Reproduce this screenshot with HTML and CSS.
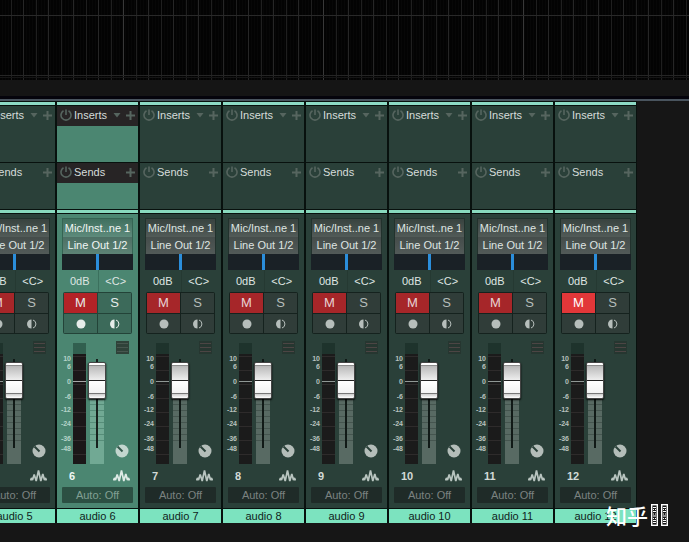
FILE: index.html
```
<!DOCTYPE html>
<html lang="en">
<head>
    <meta charset="UTF-8">
    <meta name="viewport" content="width=device-width, initial-scale=1.0">
    <title>Mixer</title>
    <link rel="stylesheet" href="styles.css">
</head>
<body>
    <div class="timeline"></div>
    <div class="divider"></div>

    <main class="mixer">
        <div class="strips" id="strips"></div>
    </main>

    <div class="watermark">
        <span>知乎</span>
        <svg width="17" height="22" viewBox="0 0 17 22" fill="none" stroke="#fff">
            <g id="box">
                <rect x="0.700" y="0.700" width="5.600" height="20.600" stroke-width="1.400"/>
                <path d="M2 3.500h3M2 5.500h1M4 5.500h1M2 7.500h3M2 10h1M4 10h1M2 12h3M2 14.500h1M4 14.500h1M2 16.500h3M2 18.500h3"/>
            </g>
            <use href="#box" x="10"/>
        </svg>
    </div>

    <script src="mixer.js"></script>
</body>
</html>
```

FILE: styles.css
```
:root {
    --mint: #7ce3bf;
    --strip-bg: #2a4039;
    --strip-line: #08110e;
    --panel-bg: #161616;
}

* {
    margin: 0;
    padding: 0;
    box-sizing: border-box;
}

body {
    background-color: var(--panel-bg);
    color: #dfe5e2;
    font-family: "Liberation Sans", Arial, sans-serif;
    font-size: 11px;
    line-height: 16px;
    overflow: hidden;
}

button {
    border: none;
    background: none;
    color: inherit;
    font: inherit;
    cursor: pointer;
}

svg {
    display: block;
}

/* arrange view */
.timeline {
    height: 80px;
    background-color: #030303;
    background-image:
        linear-gradient(transparent 15px, #292929 15px, #292929 16px, transparent 16px, transparent 75px, #252525 75px, #252525 76px, transparent 76px, transparent 77px, #151515 77px, #151515 78px, transparent 78px),
        repeating-linear-gradient(90deg, transparent 0, transparent 123px, #383838 123px, #383838 124px, transparent 124px, transparent 200px),
        repeating-linear-gradient(90deg, transparent 0, transparent 11px, #1f1f1f 11px, #1f1f1f 12px, transparent 12px, transparent 23px, #262626 23px, #262626 24px, transparent 24px, transparent 25px),
        repeating-linear-gradient(90deg, #030303 0, #030303 2px, #070707 2px, #070707 3px);
}

.divider {
    height: 19px;
    background-color: #151515;
    border-bottom: 3px solid #05040c;
}

/* mixer */
.mixer {
    border-top: 2px solid #49545e;
    overflow: hidden;
}

.strips {
    display: flex;
    gap: 2px;
    width: max-content;
    margin: -2px 0 0 -26px;
    padding-right: 1px;
    background-color: var(--strip-line);
}

.strip {
    width: 81px;
    border-top: 2px solid #3f716a;
    background-color: var(--strip-line);
}

.rack {
    height: 60px;
    margin-top: 1px;
    border-top: 3px solid #8ddac5;
    background-color: var(--strip-bg);
}

.rack.sends {
    height: 46px;
    border-top: none;
}

.rack-head {
    display: flex;
    align-items: center;
    height: 21px;
    padding: 0 3px 2px;
    border-top: 1px solid var(--strip-line);
    color: #d6dcda;
}

.sends .rack-head {
    height: 20px;
    border-top: none;
}

.rack-head button {
    color: #56655f;
}

.rack-head .label {
    flex: 1;
    margin-left: 2px;
}

.rack-head .arrow {
    margin-right: 5px;
}

.channel {
    height: 298px;
    margin-top: 1px;
    padding: 5px 5px 4px;
    border-top: 3px solid #87d9bd;
    background-color: var(--strip-bg);
    box-shadow: inset 0 1px 0 var(--strip-line);
}

.io {
    display: flex;
    flex-direction: column;
    height: 36px;
    padding-top: 1px;
    border: 1px solid #22322d;
    border-bottom: none;
    background: linear-gradient(#38433f, #515a57 50%, #444c4a 50%, #525a58);
    text-align: center;
    white-space: nowrap;
}

.io button {
    height: 17px;
    line-height: 17px;
}

.pan {
    display: block;
    width: 100%;
    height: 16px;
    appearance: none;
    background-color: #1a2126;
}

.pan::-webkit-slider-thumb {
    appearance: none;
    width: 3px;
    height: 16px;
    background-color: #2b8edb;
}

.values {
    display: grid;
    grid-template-columns: 1fr 1fr;
    height: 22px;
    line-height: 22px;
    text-align: center;
}

.values span + span {
    border-left: 1px solid #253932;
}

.buttons {
    display: grid;
    grid-template-columns: 1fr 1fr;
    grid-template-rows: 20px 19px;
    gap: 1px;
    margin: 0 1px;
    padding: 1px;
    border-radius: 2px;
    background-color: #15221e;
}

.buttons button {
    display: flex;
    align-items: center;
    justify-content: center;
    background-color: #303d39;
    color: #b6bebb;
    font-size: 13px;
}

.buttons .mute {
    background-color: #a62629;
    color: #e8d4d4;
}

.buttons .mute.bright {
    background-color: #e23739;
    color: #fff;
}

.level {
    display: flex;
    height: 130px;
    margin-left: -4px;
    padding-top: 9px;
}

.scale {
    display: grid;
    grid-template-rows: 8px 15px 15px 13px 14px 15px 10px 8px;
    justify-items: end;
    width: 13px;
    margin: 12px 2px 0 0;
    color: #b8c1be;
    font-size: 7px;
    font-weight: bold;
    line-height: 8px;
    white-space: nowrap;
}

.meter {
    width: 13px;
    height: 121px;
    background:
        linear-gradient(#909895, #909895) 0 38px / 13px 1px no-repeat,
        linear-gradient(#1e332c 11px, transparent 11px),
        repeating-linear-gradient(#1b1b1b 0, #1b1b1b 13px, #2e2b2b 13px, #2e2b2b 14px);
}

.fader {
    width: 18px;
    height: 121px;
    margin-left: 2px;
    appearance: none;
    writing-mode: vertical-lr;
    direction: rtl;
    background:
        linear-gradient(#111a17, #111a17) 8px 16px / 2px 89px no-repeat,
        repeating-linear-gradient(transparent 0, transparent 5px, #45554f 5px, #45554f 6px) 2px 56px / 14px 46px no-repeat,
        linear-gradient(#586a63, #586a63) 2px 22px / 14px 99px no-repeat;
}

.fader::-webkit-slider-thumb {
    appearance: none;
    width: 18px;
    height: 37px;
    border: 1px solid #444;
    border-radius: 2px;
    background: linear-gradient(#fff 2px, #8c8c8c 2px, #8c8c8c 3px, #b9b9b9 3px, #eee 17px, #222 17px, #222 18px, #fff 18px, #f2f2f2 30px, #777 30px, #777 31px, #ccc 31px, #fff);
    box-shadow: 0 1px 2px #000;
}

.tools {
    display: flex;
    flex-direction: column;
    justify-content: space-between;
    align-items: center;
    width: 16px;
    margin: -2px 0 6px 8px;
}

.info {
    display: flex;
    align-items: center;
    justify-content: space-between;
    height: 23px;
    padding: 0 3px 0 7px;
    color: #d3dad7;
    font-weight: bold;
}

.auto {
    display: block;
    width: 100%;
    height: 16px;
    border-radius: 1px;
    background-color: #1f2b28;
    color: #7b8280;
}

.name {
    height: 14px;
    margin-top: 1px;
    background-color: var(--mint);
    color: #10241c;
    line-height: 14px;
    text-align: center;
}

/* selected strip */
.selected .rack,
.selected .channel {
    background-color: #4b8671;
}

.selected .rack-head {
    background-color: #272425;
}

.selected .io {
    border-color: #356453;
    background: linear-gradient(#40705f, #5d8a7b 50%, #4c6f64 50%, #5d8375);
    color: #f1f6f4;
}

.selected .values span + span {
    border-color: #3b705d;
}

.selected .buttons {
    background-color: #234338;
}

.selected .buttons button {
    background-color: #3c6a5a;
    color: #e6edea;
}

.selected .buttons .mute {
    background-color: #b32327;
}

.selected .scale {
    color: #b5d3c8;
}

.selected .meter {
    background:
        linear-gradient(#a8a8a8, #a8a8a8) 0 38px / 13px 1px no-repeat,
        linear-gradient(#315f4f 11px, transparent 11px),
        repeating-linear-gradient(#1b1718 0, #1b1718 13px, #302a2b 13px, #302a2b 14px);
}

.selected .fader {
    background:
        linear-gradient(#17211d, #17211d) 8px 16px / 2px 89px no-repeat,
        repeating-linear-gradient(transparent 0, transparent 5px, #568d79 5px, #568d79 6px) 2px 56px / 14px 46px no-repeat,
        linear-gradient(#71a994, #71a994) 2px 22px / 14px 99px no-repeat;
}

.selected .info {
    color: #f0f7f4;
}

.selected .auto {
    background-color: #2c5043;
    color: #82a094;
}

/* sits over the last strip */
.watermark {
    position: absolute;
    right: 21px;
    top: 503px;
    display: flex;
    align-items: center;
    gap: 3px;
    color: #fff;
    font-family: "Noto Sans CJK SC", sans-serif;
    font-size: 21px;
    font-weight: 500;
    line-height: 24px;
}
```

FILE: mixer.js
```
const channels = [
    { number: 5 },
    { number: 6, selected: true },
    { number: 7 },
    { number: 8 },
    { number: 9 },
    { number: 10 },
    { number: 11 },
    { number: 12, bright: true }
];

const marks = ['10', '6', '0', '-6', '-12', '-24', '-36', '-48'];

const power = `<svg width="12" height="12" viewBox="0 0 12 12" fill="none" stroke="currentColor" stroke-width="1.600"><path d="M3.500 1.800A5 5 0 1 0 8.500 1.800M6 0.500V6"/></svg>`;
const arrow = `<svg width="8" height="5" viewBox="0 0 8 5" fill="currentColor"><path d="M0.500 0h7L4 4.500z"/></svg>`;
const plus = `<svg width="9" height="9" viewBox="0 0 9 9" stroke="currentColor" stroke-width="2"><path d="M4.500 0v9M0 4.500h9"/></svg>`;
const record = `<svg width="10" height="10" viewBox="0 0 10 10" fill="currentColor"><circle cx="5" cy="5" r="4.500"/></svg>`;
const monitor = `<svg width="10" height="10" viewBox="0 0 10 10"><path d="M4.500 0.500a4.500 4.500 0 0 0 0 9z" fill="currentColor"/><path d="M6 1a4.200 4.200 0 0 1 0 8" fill="none" stroke="currentColor"/></svg>`;

function knobIcon(selected) {
    const face = selected ? '#c3d6cf' : '#b4bdb9';
    const hand = selected ? '#35594c' : '#2a4039';
    return `<svg width="14" height="14" viewBox="0 0 14 14"><circle cx="7" cy="7" r="6.500" fill="${face}"/><path d="M7.500 7.500L2.500 2.500" stroke="${hand}" stroke-width="2"/></svg>`;
}

function waveIcon(selected) {
    const color = selected ? '#deebe6' : '#b9c5c0';
    return `<svg width="17" height="14" viewBox="0 0 17 14" fill="none" stroke="${color}" stroke-width="1.700" stroke-linejoin="bevel"><path d="M0.500 11.500L1.500 9L2.500 11L4.200 5.500L6.200 12L8.500 1.500L10.800 12L12.800 5L14.500 11L15.500 9L16.500 11.500"/></svg>`;
}

function listIcon(selected) {
    const box = selected ? '#2f4239' : '#263630';
    const line = selected ? '#47574f' : '#4c4544';
    return `<svg width="13" height="13" viewBox="0 0 13 13"><path d="M0 0h13v13H0z" fill="${box}"/><path d="M1 2.500h11M1 6.500h11M1 10.500h11" stroke="${line}"/></svg>`;
}

function renderStrip(ch) {
    return `
        <section class="strip ${ch.selected ? 'selected' : ''}">
            <div class="rack">
                <div class="rack-head">
                    <button aria-label="Bypass inserts">${power}</button>
                    <span class="label">Inserts</span>
                    <button class="arrow" aria-label="Insert menu">${arrow}</button>
                    <button aria-label="Add insert">${plus}</button>
                </div>
            </div>
            <div class="rack sends">
                <div class="rack-head">
                    <button aria-label="Bypass sends">${power}</button>
                    <span class="label">Sends</span>
                    <button aria-label="Add send">${plus}</button>
                </div>
            </div>
            <div class="channel">
                <div class="io">
                    <button>Mic/Inst..ne 1</button>
                    <button>Line Out 1/2</button>
                </div>
                <input class="pan" type="range" min="-100" max="100" value="0" aria-label="Pan">
                <div class="values"><span>0dB</span><span>&lt;C&gt;</span></div>
                <div class="buttons">
                    <button class="mute ${ch.bright ? 'bright' : ''}">M</button>
                    <button>S</button>
                    <button aria-label="Record">${record}</button>
                    <button aria-label="Monitor">${monitor}</button>
                </div>
                <div class="level">
                    <div class="scale">${marks.map(m => `<span>${m}</span>`).join('')}</div>
                    <div class="meter"></div>
                    <input class="fader" type="range" min="0" max="100" value="77" aria-label="Volume">
                    <div class="tools">
                        <button aria-label="Group">${listIcon(ch.selected)}</button>
                        <button aria-label="Gain">${knobIcon(ch.selected)}</button>
                    </div>
                </div>
                <div class="info"><span>${ch.number}</span>${waveIcon(ch.selected)}</div>
                <button class="auto">Auto: Off</button>
            </div>
            <div class="name">audio ${ch.number}</div>
        </section>`;
}

document.getElementById('strips').innerHTML = channels.map(renderStrip).join('');
```
